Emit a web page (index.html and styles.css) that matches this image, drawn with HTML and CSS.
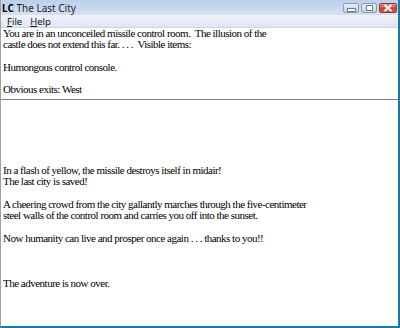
FILE: index.html
```html
<!DOCTYPE html>
<html lang="en">
<head>
  <meta charset="UTF-8" />
  <title>The Last City</title>
  <link rel="stylesheet" href="styles.css">
</head>
<body>

<div class="window">
  <div class="titlebar">
    <div class="title"><b>LC</b> The Last City</div>
    <div class="controls">
      <span class="btn min"><i></i></span>
      <span class="btn max"><i></i></span>
      <span class="btn close">
        <svg width="10" height="8" viewBox="0 0 10 8">
          <path d="M1.5 1 L8.5 7 M8.5 1 L1.5 7" stroke="#fff" stroke-width="2"/>
        </svg>
      </span>
    </div>
  </div>

  <div class="menubar">
    <span><u>F</u>ile</span>
    <span><u>H</u>elp</span>
  </div>

  <div class="room">
    <p>You are in an unconceiled missile control room.&nbsp; The illusion of the<br>
    castle does not extend this far. . . .&nbsp; Visible items:</p>
    <p>Humongous control console.</p>
    <p>Obvious exits: West</p>
  </div>

  <div class="story">
    <p>In a flash of yellow, the missile destroys itself in midair!<br>
    The last city is saved!</p>
    <p>A cheering crowd from the city gallantly marches through the five-centimeter<br>
    steel walls of the control room and carries you off into the sunset.</p>
    <p>Now humanity can live and prosper once again . . . thanks to you!!</p>
    <p class="gap">The adventure is now over.</p>
  </div>
</div>

</body>
</html>
```

FILE: styles.css
```css
body {
  margin: 0;
  padding: 0;
  background: #fff;
}

.window {
  width: 400px;
  height: 328px;
  box-sizing: border-box;
  display: flex;
  flex-direction: column;
  border-left: 1px solid #a0a0a0;
  border-right: 2px solid #1a7aa3;
  border-bottom: 2px solid #1a7aa3;
  overflow: hidden;
}

.titlebar {
  height: 15px;
  display: flex;
  justify-content: space-between;
  align-items: center;
  background: linear-gradient(#bcd0ea, #d3e1f3);
  font-family: "Noto Sans", sans-serif;
  font-size: 10px;
  color: #1e1e1e;
}

.title {
  padding-left: 1px;
}

.title b {
  color: #000;
}

.controls {
  display: flex;
  gap: 2px;
  padding-right: 1px;
  padding-top: 1px;
}

.btn {
  width: 16px;
  height: 10px;
  border: 1px solid #8d9bb0;
  border-radius: 2px;
  background: linear-gradient(#e4ecf6, #c4d3e6);
  display: flex;
  align-items: center;
  justify-content: center;
  box-sizing: border-box;
}

.btn.min i {
  width: 7px;
  height: 2px;
  background: #fff;
  border: 1px solid #6c7a8e;
  margin-top: 3px;
}

.btn.max i {
  width: 5px;
  height: 4px;
  border: 1px solid #6c7a8e;
  background: #fff;
}

.btn.close {
  width: 18px;
  border-color: #8f3a32;
  background: linear-gradient(#e8968a, #c4473a 55%, #d0604f);
}

.menubar {
  height: 12px;
  display: flex;
  gap: 8px;
  padding-left: 6px;
  align-items: center;
  background: linear-gradient(#f0f3fb, #dfe5f3);
  border-bottom: 1px solid #ccd4e6;
  font-family: "Noto Sans", sans-serif;
  font-size: 9.5px;
  color: #111;
}

.room, .story {
  font-family: "Liberation Serif", "Times New Roman", serif;
  font-size: 11px;
  letter-spacing: -0.5px;
  line-height: 11.25px;
  color: #000;
  padding-left: 2px;
}

.room p, .story p {
  margin: 0 0 11.25px 0;
}

.room {
  height: 72px;
  border-bottom: 1px solid #7d7d7d;
  box-sizing: border-box;
}

.story {
  flex: 1;
  padding-top: 65px;
}

.story p.gap {
  margin-top: 33.75px;
}
```
